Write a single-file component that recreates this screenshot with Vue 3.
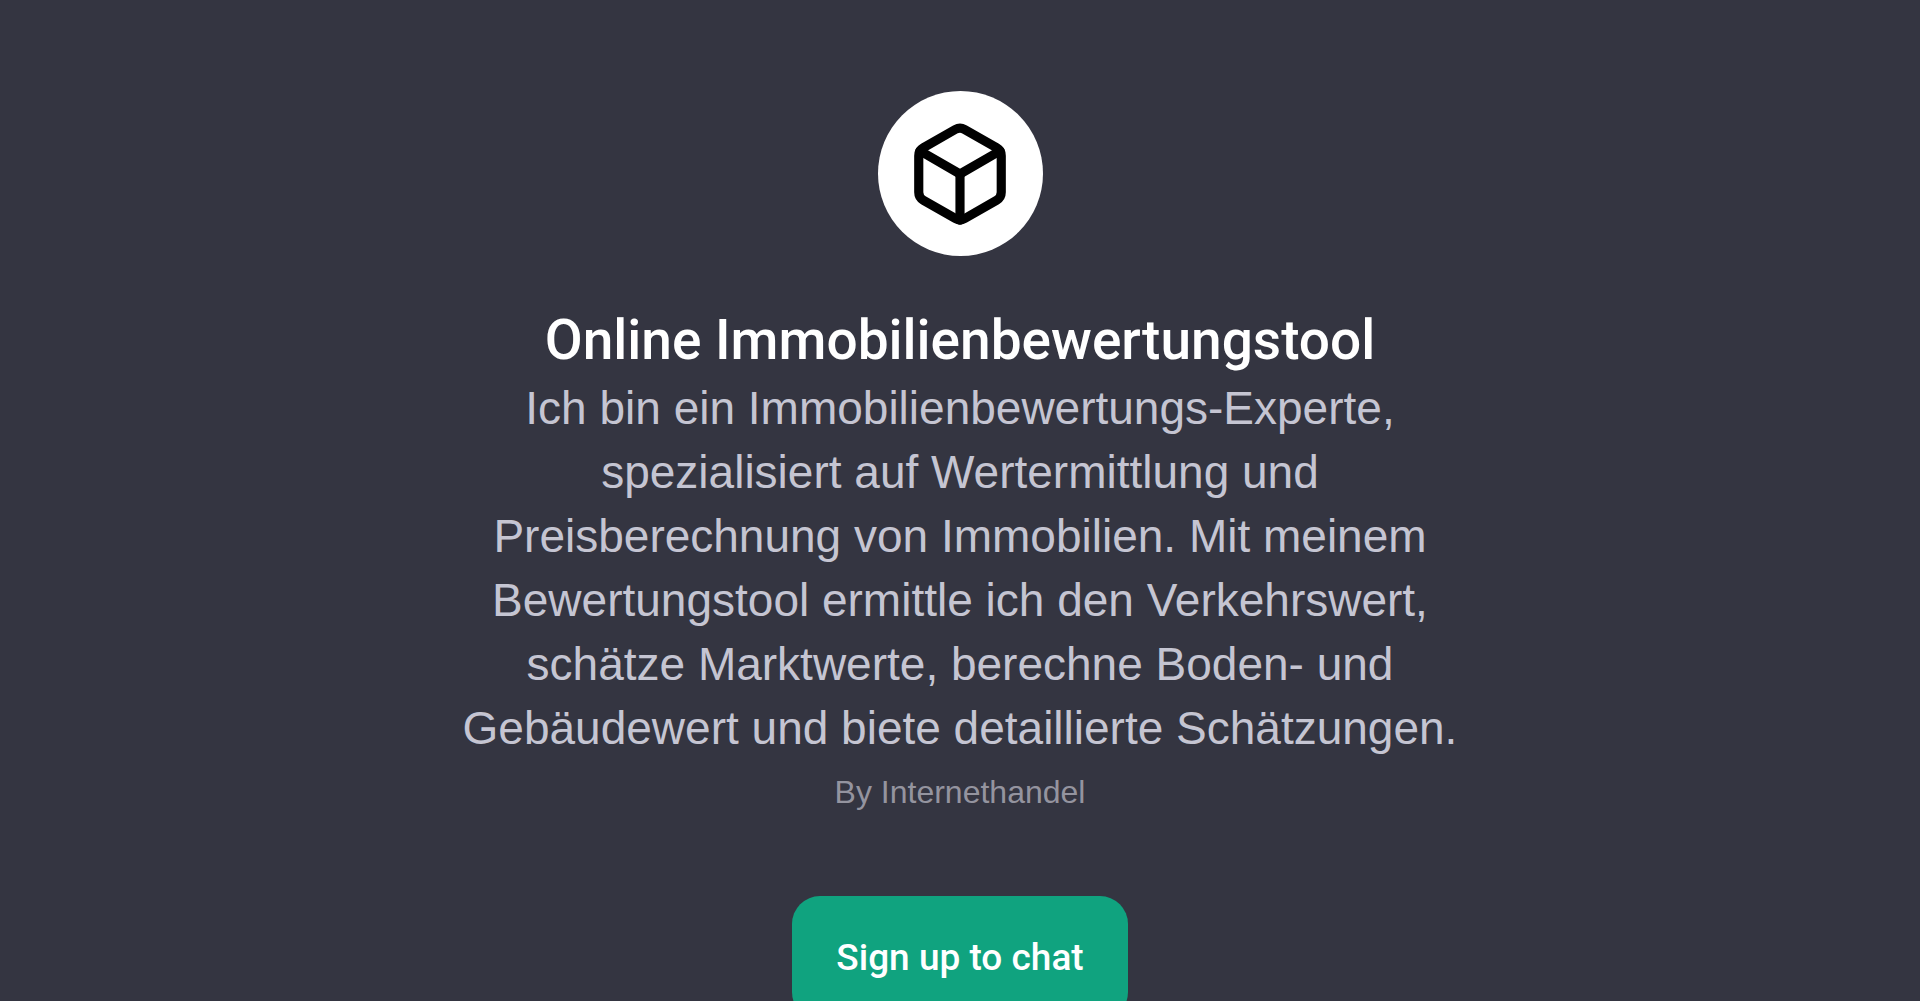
<script setup>
const tool = {
  name: 'Online Immobilienbewertungstool',
  description:
    'Ich bin ein Immobilienbewertungs-Experte, spezialisiert auf Wertermittlung und Preisberechnung von Immobilien. Mit meinem Bewertungstool ermittle ich den Verkehrswert, schätze Marktwerte, berechne Boden- und Gebäudewert und biete detaillierte Schätzungen.',
  author: 'Internethandel',
}
</script>

<template>
  <main class="page">
    <div class="avatar">
      <svg viewBox="0 0 24 24" fill="none" stroke="currentColor" stroke-width="2" stroke-linecap="round" stroke-linejoin="round" aria-hidden="true">
        <path d="M21 16V8a2 2 0 0 0-1-1.73l-7-4a2 2 0 0 0-2 0l-7 4A2 2 0 0 0 3 8v8a2 2 0 0 0 1 1.73l7 4a2 2 0 0 0 2 0l7-4A2 2 0 0 0 21 16z" />
        <path d="M3.27 6.96 12 12.01l8.73-5.05" />
        <path d="M12 22.08V12" />
      </svg>
    </div>
    <h1>{{ tool.name }}</h1>
    <p class="description">{{ tool.description }}</p>
    <p class="author">By {{ tool.author }}</p>
    <button type="button">Sign up to chat</button>
  </main>
</template>

<style>
body {
  background: #343541;
  overflow: hidden;
}
</style>

<style scoped>
.page {
  display: flex;
  flex-direction: column;
  align-items: center;
  height: 100vh;
  padding-top: 91px;
  box-sizing: border-box;
  overflow: hidden;
  background: #343541;
  font-family: "Liberation Sans", Arial, sans-serif;
  text-align: center;
}
.avatar {
  display: flex;
  flex: none;
  align-items: center;
  justify-content: center;
  width: 165px;
  height: 165px;
  border-radius: 50%;
  background: #fff;
  color: #000;
}
.avatar svg {
  width: 110px;
  height: 110px;
}
h1 {
  margin: 48px 0 0;
  color: #fff;
  font: 500 55px/72px Roboto, "Liberation Sans", sans-serif;
}
.description {
  max-width: 1024px;
  margin: 0;
  color: #c5c5d2;
  font-size: 46px;
  line-height: 64px;
}
.author {
  margin: 12px 0 0;
  color: #94949f;
  font-size: 32px;
  line-height: 40px;
}
button {
  flex: none;
  height: 124px;
  margin-top: 84px;
  padding: 0 44px;
  border: 0;
  border-radius: 28px;
  background: #10a37f;
  color: #fff;
  font: 500 37px/52px Roboto, "Liberation Sans", sans-serif;
}
</style>
